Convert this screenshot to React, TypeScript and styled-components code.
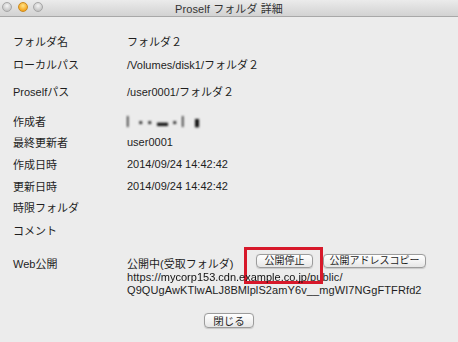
import React from 'react';
import styled, { createGlobalStyle } from 'styled-components';

const GlobalStyle = createGlobalStyle`
  html, body {
    margin: 0;
    padding: 0;
    background: #ececec;
  }
  body {
    font-family: 'Liberation Sans', 'Noto Sans CJK JP', sans-serif;
  }
`;

const Window = styled.div`
  width: 458px;
  height: 342px;
  background: #ececec;
  display: flex;
  flex-direction: column;
  overflow: hidden;
  color: #1e1e1e;
  font-size: 11px;
`;

const TitleBar = styled.div`
  position: relative;
  height: 16px;
  flex: none;
  background: linear-gradient(#ebebeb, #d2d2d2);
  border-bottom: 1px solid #a8a8a8;
  display: flex;
  align-items: center;
  justify-content: center;
`;

const Lights = styled.div`
  position: absolute;
  left: 2px;
  top: 2px;
  display: flex;
  gap: 5.5px;
`;

const Light = styled.span<{ $active?: boolean }>`
  width: 10px;
  height: 10px;
  border-radius: 50%;
  border: 1px solid ${(p) => (p.$active ? '#c98a1f' : '#a6a6a6')};
  background: ${(p) =>
    p.$active
      ? 'radial-gradient(circle at 50% 35%, #ffe58a, #f5a623 70%)'
      : 'radial-gradient(circle at 50% 35%, #f4f4f4, #c6c6c6 70%)'};
  box-sizing: border-box;
`;

const Title = styled.div`
  font-size: 11px;
  color: #333;
  letter-spacing: 0.1px;
`;

const Content = styled.div`
  padding: 13px 13px 0 13px;
  display: flex;
  flex-direction: column;
`;

const Row = styled.div<{ $top?: number }>`
  display: grid;
  grid-template-columns: 114px 1fr;
  height: 22px;
  align-items: center;
  margin-top: ${(p) => p.$top ?? 0}px;
`;

const Label = styled.div`
  white-space: nowrap;
`;

const Value = styled.div`
  white-space: nowrap;
`;

const Blurred = styled.span<{ $dark?: boolean }>`
  filter: blur(${(p) => (p.$dark ? 0.55 : 0.9)}px);
  letter-spacing: ${(p) => (p.$dark ? 0 : 1)}px;
  color: #111;
`;

const WebRow = styled.div`
  display: grid;
  grid-template-columns: 114px 1fr;
  margin-top: 13px;
  line-height: 13px;
`;

const WebLabel = styled.div`
  padding-top: 4px;
`;

const WebValue = styled.div`
  display: flex;
  flex-direction: column;
`;

const StatusLine = styled.div`
  display: flex;
  height: 17px;
`;

const StatusText = styled.span`
  width: 129px;
  align-self: flex-end;
`;

const ButtonWrap = styled.div`
  position: relative;
  display: flex;
`;

const MacButton = styled.button<{ $w: number }>`
  width: ${(p) => p.$w}px;
  height: 14px;
  padding: 0;
  border: 1px solid #9c9c9c;
  border-radius: 4px;
  background: linear-gradient(#ffffff, #f1f1f1 60%, #e6e6e6);
  font-family: 'Liberation Sans', 'Noto Sans CJK JP', sans-serif;
  font-size: 10px;
  line-height: 12px;
  color: #1e1e1e;
  box-shadow: 0 0.5px 1px rgba(0, 0, 0, 0.15);
`;

const Highlight = styled.div`
  position: absolute;
  left: -12px;
  top: -7px;
  width: 79px;
  height: 37px;
  border: 3px solid #d7182a;
  box-sizing: border-box;
  pointer-events: none;
`;

const Gap = styled.span`
  width: 10px;
`;

const UrlLine = styled.div`
  white-space: nowrap;
  letter-spacing: 0.1px;
`;

const Footer = styled.div`
  display: flex;
  justify-content: center;
  margin-top: 16px;
`;

const CloseButton = styled(MacButton)`
  height: 15px;
  font-size: 10.5px;
`;

export default function App() {
  const rows: { label: string; value: React.ReactNode; top: number }[] = [
    { label: 'フォルダ名', value: 'フォルダ２', top: 0 },
    { label: 'ローカルパス', value: '/Volumes/disk1/フォルダ２', top: 1 },
    { label: 'Proselfパス', value: '/user0001/フォルダ２', top: 5 },
    { label: '作成者', value: <Blurred>▏▪ ▪ ▬ ▪ ▏▮</Blurred>, top: 8 },
    { label: '最終更新者', value: 'user0001', top: -1 },
    { label: '作成日時', value: '2014/09/24 14:42:42', top: 0 },
    { label: '更新日時', value: '2014/09/24 14:42:42', top: 0 },
    { label: '時限フォルダ', value: '', top: -1 },
    { label: 'コメント', value: '', top: 1 },
  ];

  return (
    <>
      <GlobalStyle />
      <Window>
        <TitleBar>
          <Lights>
            <Light />
            <Light $active />
            <Light />
          </Lights>
          <Title>Proself フォルダ 詳細</Title>
        </TitleBar>
        <Content>
          {rows.map((r) => (
            <Row key={r.label} $top={r.top}>
              <Label>{r.label}</Label>
              <Value>{r.value}</Value>
            </Row>
          ))}
          <WebRow>
            <WebLabel>Web公開</WebLabel>
            <WebValue>
              <StatusLine>
                <StatusText>公開中(受取フォルダ)</StatusText>
                <ButtonWrap>
                  <MacButton $w={57}>公開停止</MacButton>
                  <Highlight />
                </ButtonWrap>
                <Gap />
                <MacButton $w={103}>公開アドレスコピー</MacButton>
              </StatusLine>
              <UrlLine>
                https://<Blurred $dark>mycorp153.cdn.example.co.jp</Blurred>/public/
              </UrlLine>
              <UrlLine>Q9QUgAwKTlwALJ8BMlplS2amY6v__mgWI7NGgFTFRfd2</UrlLine>
            </WebValue>
          </WebRow>
          <Footer>
            <CloseButton $w={50}>閉じる</CloseButton>
          </Footer>
        </Content>
      </Window>
    </>
  );
}
